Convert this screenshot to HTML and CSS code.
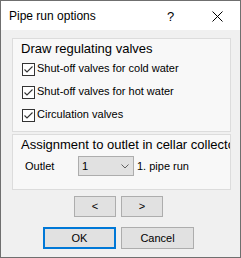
FILE: index.html
```html
<!DOCTYPE html>
<html>
<head>
<meta charset="utf-8">
<link rel="stylesheet" href="styles.css">
</head>
<body>
<div class="window">
  <div class="titlebar">
    <span class="title">Pipe run options</span>
    <span class="help">?</span>
    <svg class="close" width="11" height="11" viewBox="0 0 11 11"><path d="M0.5 0.5 L10.5 10.5 M10.5 0.5 L0.5 10.5" stroke="#000" stroke-width="1" fill="none"/></svg>
  </div>
  <div class="content">
    <div class="group group-valves">
      <div class="group-title">Draw regulating valves</div>
      <div class="checks">
        <label class="check"><svg class="box" width="13" height="13" viewBox="0 0 13 13"><rect x="0.5" y="0.5" width="12" height="12" fill="#fff" stroke="#333"/><path d="M2.5 6.5 L5 9 L10.5 3.5" stroke="#333" stroke-width="1.1" fill="none"/></svg><span>Shut-off valves for cold water</span></label>
        <label class="check"><svg class="box" width="13" height="13" viewBox="0 0 13 13"><rect x="0.5" y="0.5" width="12" height="12" fill="#fff" stroke="#333"/><path d="M2.5 6.5 L5 9 L10.5 3.5" stroke="#333" stroke-width="1.1" fill="none"/></svg><span>Shut-off valves for hot water</span></label>
        <label class="check"><svg class="box" width="13" height="13" viewBox="0 0 13 13"><rect x="0.5" y="0.5" width="12" height="12" fill="#fff" stroke="#333"/><path d="M2.5 6.5 L5 9 L10.5 3.5" stroke="#333" stroke-width="1.1" fill="none"/></svg><span>Circulation valves</span></label>
      </div>
    </div>
    <div class="group group-outlet">
      <div class="group-title">Assignment to outlet in cellar collector</div>
      <div class="outlet-row">
        <span class="outlet-label">Outlet</span>
        <div class="combo"><span class="combo-value">1</span><svg class="chevron" width="8" height="5" viewBox="0 0 8 5"><path d="M0.5 0.5 L4 4 L7.5 0.5" stroke="#606060" stroke-width="1" fill="none"/></svg></div>
        <span class="outlet-text">1. pipe run</span>
      </div>
    </div>
    <div class="nav-row">
      <button class="btn btn-small">&lt;</button>
      <button class="btn btn-small">&gt;</button>
    </div>
    <div class="action-row">
      <button class="btn btn-wide btn-default">OK</button>
      <button class="btn btn-wide">Cancel</button>
    </div>
  </div>
</div>
</body>
</html>
```

FILE: styles.css
```css
html, body {
  margin: 0;
  padding: 0;
  background: #f0f0f0;
}

body {
  font-family: "Liberation Sans", Arial, sans-serif;
  font-size: 11px;
  color: #000;
}

.window {
  width: 241px;
  height: 258px;
  box-sizing: border-box;
  border: 1px solid #6f6f6f;
  background: #f0f0f0;
  display: flex;
  flex-direction: column;
}

.titlebar {
  height: 29px;
  background: #fff;
  display: flex;
  align-items: center;
  padding-left: 8px;
}

.title {
  font-size: 12px;
  line-height: 14px;
  flex: 1;
}

.help {
  font-size: 13px;
  line-height: 15px;
  width: 8px;
  margin-right: 37px;
  margin-top: 1px;
}

.close {
  display: block;
  margin-right: 17px;
  margin-top: 2px;
}

.content {
  padding: 8px 0 0 11px;
  display: flex;
  flex-direction: column;
}

.group {
  width: 219px;
  box-sizing: border-box;
  border: 1px solid #dcdcdc;
  background: #f8f8f8;
  padding: 2px 0 0 9px;
  overflow: hidden;
}

.group-valves {
  height: 94px;
}

.group-outlet {
  height: 56px;
  margin-top: 2px;
}

.group-title {
  font-size: 13px;
  line-height: 15px;
  margin-left: -1px;
  white-space: nowrap;
}

.checks {
  margin-top: 7px;
  display: flex;
  flex-direction: column;
  gap: 10px;
}

.check {
  display: flex;
  align-items: flex-start;
  height: 13px;
  gap: 2px;
}

.box {
  display: block;
  flex: none;
}

.check span {
  line-height: 11px;
  margin-top: 0;
  white-space: nowrap;
}

.outlet-row {
  margin-top: 4px;
  height: 20px;
  display: flex;
  align-items: center;
}

.outlet-label {
  width: 56px;
  padding-left: 3px;
  box-sizing: border-box;
  line-height: 13px;
}

.combo {
  width: 56px;
  height: 20px;
  box-sizing: border-box;
  border: 1px solid #adadad;
  background: #e1e1e1;
  display: flex;
  align-items: center;
  padding-left: 3px;
}

.combo-value {
  line-height: 13px;
  flex: 1;
}

.chevron {
  display: block;
  margin-right: 4px;
}

.outlet-text {
  margin-left: 3px;
  line-height: 13px;
  white-space: nowrap;
}

.nav-row,
.action-row {
  display: flex;
  justify-content: center;
  gap: 5px;
  padding-right: 15px;
}

.nav-row {
  margin-top: 6px;
}

.action-row {
  margin-top: 10px;
}

.btn {
  font-family: "Liberation Sans", Arial, sans-serif;
  font-size: 11px;
  color: #000;
  background: #e1e1e1;
  border: 1px solid #adadad;
  box-sizing: border-box;
  padding: 0;
  margin: 0;
  line-height: 13px;
}

.btn-small {
  width: 42px;
  height: 21px;
}

.btn-wide {
  width: 73px;
  height: 22px;
}

.btn-default {
  border: 2px solid #0078d7;
}
```
